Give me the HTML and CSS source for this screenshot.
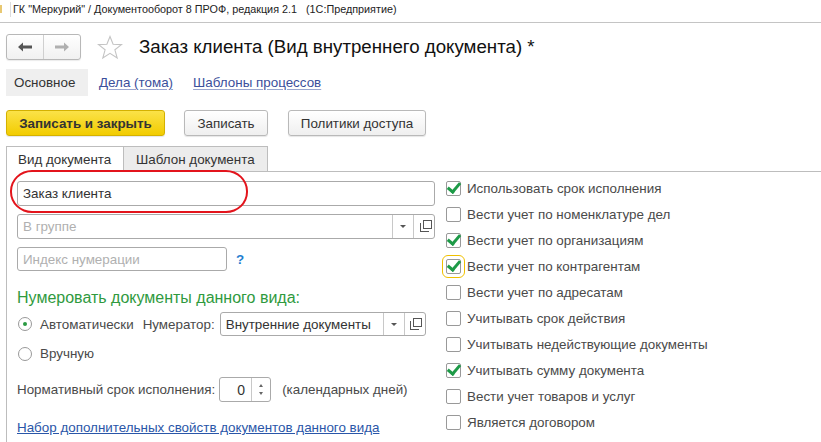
FILE: index.html
```html
<!DOCTYPE html>
<html lang="ru">
<head>
<meta charset="utf-8">
<link rel="stylesheet" href="styles.css">
</head>
<body>
<div class="titlebar">
  <span class="tb-mark"></span><span class="tb-sep"></span>
  <span class="tb-text">ГК "Меркурий" / Документооборот 8 ПРОФ, редакция 2.1&nbsp;&nbsp;&nbsp;(1С:Предприятие)</span>
</div>
<div class="header">
  <div class="nav">
    <span class="nav-btn"><svg width="16" height="12" viewBox="0 0 16 12"><path d="M1 6 L6 1.5 L6 4.5 L15 4.5 L15 7.5 L6 7.5 L6 10.5 Z" fill="#555"/></svg></span>
    <span class="nav-btn"><svg width="16" height="12" viewBox="0 0 16 12"><path d="M15 6 L10 1.5 L10 4.5 L1 4.5 L1 7.5 L10 7.5 L10 10.5 Z" fill="#b0b0b0"/></svg></span>
  </div>
  <svg class="star" width="26" height="25" viewBox="0 0 26 25"><path d="M13 1.5 L16.1 9.3 L24.5 9.6 L17.9 14.8 L20.2 23 L13 18.3 L5.8 23 L8.1 14.8 L1.5 9.6 L9.9 9.3 Z" fill="none" stroke="#c4c4c4" stroke-width="1.1" stroke-linejoin="miter"/></svg>
  <h1 class="title">Заказ клиента (Вид внутреннего документа) *</h1>
</div>
<div class="sections">
  <span class="sec active">Основное</span>
  <span class="sec link">Дела (тома)</span>
  <span class="sec link">Шаблоны процессов</span>
</div>
<div class="toolbar">
  <button class="btn primary">Записать и закрыть</button>
  <button class="btn">Записать</button>
  <button class="btn">Политики доступа</button>
</div>
<div class="tabs">
  <span class="tab active">Вид документа</span>
  <span class="tab">Шаблон документа</span>
  <span class="tab-rest"></span>
</div>
<div class="content">
  <div class="col-left">
    <div class="field name-field"><span class="val">Заказ клиента</span><span class="ellipse"></span></div>
    <div class="field combo wide"><span class="ph">В группе</span><span class="cb-btn"><i class="tri"></i></span><span class="cb-btn"><i class="open"></i></span></div>
    <div class="row index-row">
      <div class="field index"><span class="ph">Индекс нумерации</span></div>
      <span class="q">?</span>
    </div>
    <div class="green-h">Нумеровать документы данного вида:</div>
    <div class="row auto-row">
      <span class="radio on"></span><span class="lbl">Автоматически</span>
      <span class="lbl numer">Нумератор:</span>
      <div class="field combo numcombo"><span class="val">Внутренние документы</span><span class="cb-btn"><i class="tri"></i></span><span class="cb-btn"><i class="open"></i></span></div>
    </div>
    <div class="row manual-row"><span class="radio"></span><span class="lbl">Вручную</span></div>
    <div class="row term-row">
      <span class="lbl">Нормативный срок исполнения:</span>
      <div class="field spin"><span class="num">0</span><span class="spin-btns"><i class="up"></i><i class="down"></i></span></div>
      <span class="lbl days">(календарных дней)</span>
    </div>
    <a class="bottom-link">Набор дополнительных свойств документов данного вида</a>
  </div>
  <div class="col-right">
    <div class="chk on"><span class="box"></span>Использовать срок исполнения</div>
    <div class="chk"><span class="box"></span>Вести учет по номенклатуре дел</div>
    <div class="chk on"><span class="box"></span>Вести учет по организациям</div>
    <div class="chk on focus"><span class="box"></span>Вести учет по контрагентам</div>
    <div class="chk"><span class="box"></span>Вести учет по адресатам</div>
    <div class="chk"><span class="box"></span>Учитывать срок действия</div>
    <div class="chk"><span class="box"></span>Учитывать недействующие документы</div>
    <div class="chk on"><span class="box"></span>Учитывать сумму документа</div>
    <div class="chk"><span class="box"></span>Вести учет товаров и услуг</div>
    <div class="chk"><span class="box"></span>Является договором</div>
  </div>
</div>
</body>
</html>
```

FILE: styles.css
```css
* { box-sizing: border-box; }
html, body { margin: 0; padding: 0; }
body {
  width: 821px; height: 442px; overflow: hidden;
  background: #fff;
  font-family: "Liberation Sans", Arial, sans-serif;
  font-size: 13.4px; color: #4a4a4a;
}
.titlebar {
  height: 23px; border-bottom: 1px solid #c4c4c4;
  display: flex; align-items: center; position: relative;
}
.tb-mark { width: 2px; height: 8px; background: #e8c872; margin-top: -4px; }
.tb-sep { width: 1px; height: 15px; background: #dcdcdc; margin-left: 8px; margin-top: -4px; }
.tb-text { margin-left: 2px; font-size: 10.8px; color: #222; margin-top: -4px; white-space: nowrap; }

.header { display: flex; align-items: center; height: 26px; margin-top: 11px; padding-left: 6px; }
.nav { display: flex; border: 1px solid #b8b8b8; border-radius: 3px; height: 26px; width: 75px;
  background: linear-gradient(#ffffff, #f1f1f1); box-shadow: 0 1px 1px rgba(0,0,0,0.08); }
.nav-btn { flex: 1; display: flex; align-items: center; justify-content: center; }
.nav-btn + .nav-btn { border-left: 1px solid #d0d0d0; }
.star { margin-left: 16px; }
.title { margin: 0 0 0 16px; font-size: 18.7px; font-weight: normal; color: #111; white-space: nowrap; }

.sections { display: flex; margin-top: 9px; padding-left: 6px; height: 27px; align-items: stretch; }
.sec { display: flex; align-items: center; white-space: nowrap; }
.sec.active { background: #efefef; padding: 0 8px 0 8px; color: #333; width: 82px; }
.sec.link { color: #3b4f9b; text-decoration: underline; text-decoration-color: #9aa6cf; text-underline-offset: 2px; margin-left: 11px; margin-right: 9px; }

.toolbar { display: flex; margin-top: 14px; padding-left: 6px; }
.btn { height: 26px; font-family: inherit; font-size: 13.4px; color: #333; border: 1px solid #b9b9b9;
  border-radius: 3px; background: linear-gradient(#ffffff, #efefef); padding: 0;
  box-shadow: 0 1px 1px rgba(0,0,0,0.1); white-space: nowrap; }
.btn:nth-child(1) { width: 159px; margin-right: 19px; }
.btn:nth-child(2) { width: 84px; margin-right: 20px; }
.btn:nth-child(3) { width: 138px; }
.btn.primary { background: linear-gradient(#fbe248, #f2cc00); border-color: #d4b100; color: #333; font-weight: bold; }

.tabs { display: flex; margin-top: 10px; padding-left: 6px; height: 26px; }
.tab { display: flex; align-items: center; color: #333; white-space: nowrap;
  border: 1px solid #bdbdbd; border-bottom: none; }
.tab.active { background: #fff; width: 118px; padding-left: 11px; }
.tab:not(.active) { background: #ececec; border-left: none; width: 144px; padding-left: 12px; border-bottom: 1px solid #bdbdbd; }
.tab-rest { flex: 1; border-bottom: 1px solid #bdbdbd; }

.content { display: flex; border-left: 1px solid #bdbdbd; margin-left: 6px; height: 280px; padding-left: 10px; }
.col-left { width: 418px; display: flex; flex-direction: column; }
.col-right { margin-left: 11px; padding-top: 3px; display: flex; flex-direction: column; }

.field { border: 1px solid #aaaaaa; border-radius: 3px; height: 25px; display: flex; align-items: center; background: #fff; position: relative; }
.name-field { margin-top: 9px; padding-left: 5px; }
.val { color: #333; white-space: nowrap; }
.ph { color: #b0b0b0; padding-left: 5px; flex: 1; }
.combo.wide { margin-top: 8px; }
.cb-btn { width: 21px; height: 100%; border-left: 1px solid #c8c8c8; display: flex; align-items: center; justify-content: center; }
.tri { width: 0; height: 0; border-left: 3px solid transparent; border-right: 3px solid transparent; border-top: 3px solid #555; }
.open { width: 9px; height: 9px; position: relative; border-left: 1px solid #555; border-bottom: 1px solid #555; margin-top: 2px; }
.open::after { content: ""; position: absolute; left: 2px; top: -3px; width: 7px; height: 7px; border: 1px solid #555; background: #fff; }
.ellipse { position: absolute; left: -8px; top: -12px; width: 238px; height: 43px; border: 2px solid #e3141c; border-radius: 22px / 21px; pointer-events: none; }

.row { display: flex; align-items: center; }
.index-row { margin-top: 8px; }
.field.index { width: 210px; height: 24px; }
.q { color: #1f7fd0; margin-left: 9px; font-weight: bold; }

.green-h { color: #2f9a3e; font-size: 16px; margin-top: 18px; }
.auto-row { margin-top: 5px; }
.radio { width: 14px; height: 14px; border: 1px solid #999; border-radius: 50%; margin-left: 1px; position: relative; background: #fff; }
.radio.on::after { content: ""; position: absolute; left: 4px; top: 4px; width: 4px; height: 4px; border-radius: 50%; background: #2a9a42; }
.lbl { margin-left: 8px; color: #4a4a4a; white-space: nowrap; }
.numer { margin-left: 9px; }
.numcombo { width: 206px; margin-left: 5px; height: 24px; }
.numcombo .val { flex: 1; padding-left: 5px; }
.manual-row { margin-top: 10px; }
.term-row { margin-top: 16px; }
.term-row .lbl:first-child { margin-left: 0; }
.spin { width: 52px; height: 25px; margin-left: 4px; }
.spin .num { flex: 1; text-align: right; padding-right: 6px; color: #333; font-size: 14px; }
.spin-btns { width: 19px; height: 100%; border-left: 1px solid #c8c8c8; display: flex; flex-direction: column; align-items: center; justify-content: center; gap: 5px; }
.up { border-left: 2.5px solid transparent; border-right: 2.5px solid transparent; border-bottom: 3px solid #666; }
.down { border-left: 2.5px solid transparent; border-right: 2.5px solid transparent; border-top: 3px solid #666; }
.days { margin-left: 11px; }
.bottom-link { margin-top: 18px; color: #2a56a8; text-decoration: underline; white-space: nowrap; }

.chk { height: 26px; display: flex; align-items: center; color: #4a4a4a; position: relative; white-space: nowrap; }
.box { width: 15px; height: 15px; border: 1px solid #999; border-radius: 2px; margin-right: 6px; position: relative; background: #fff; }
.chk.on .box::after { content: ""; position: absolute; left: 3px; top: -2px; width: 5px; height: 10px;
  border-right: 3px solid #1d9a47; border-bottom: 3px solid #1d9a47; transform: rotate(40deg); }
.chk.focus .box { outline: 1px solid #f0c000; outline-offset: 3px; }
```
